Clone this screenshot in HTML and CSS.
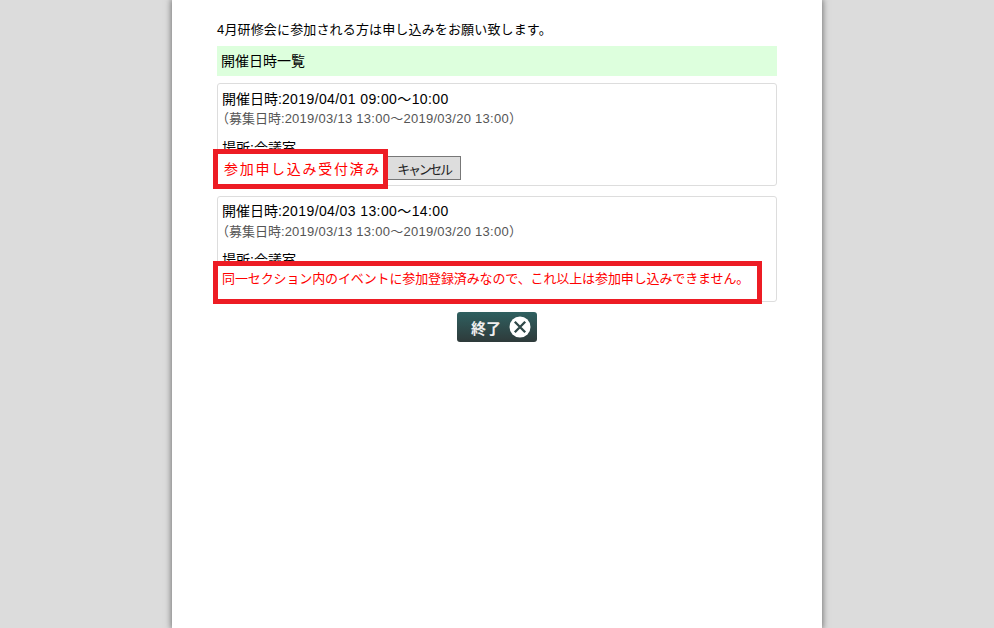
FILE: index.html
```html
<!DOCTYPE html>
<html lang="ja">
<head>
    <meta charset="UTF-8">
    <title>開催日時一覧</title>
    <link rel="stylesheet" href="styles.css">
</head>
<body>
    <div class="page">
        <p class="intro">4月研修会に参加される方は申し込みをお願い致します。</p>
        <div class="list-title">開催日時一覧</div>

        <div class="event">
            <div class="event-date">開催日時:<span class="date-value">2019/04/01 09:00～10:00</span></div>
            <div class="event-term">（募集日時:<span class="term-value">2019/03/13 13:00～2019/03/20 13:00</span>）</div>
            <div class="event-place">場所:会議室</div>
            <div class="event-status">
                <span class="done">参加申し込み受付済み</span>
                <button class="cancel-button">キャンセル</button>
            </div>
            <div class="mark mark-first"></div>
        </div>

        <div class="event">
            <div class="event-date">開催日時:<span class="date-value">2019/04/03 13:00～14:00</span></div>
            <div class="event-term">（募集日時:<span class="term-value">2019/03/13 13:00～2019/03/20 13:00</span>）</div>
            <div class="event-place">場所:会議室</div>
            <div class="event-status event-status-wide">
                <span class="notice">同一セクション内のイベントに参加登録済みなので、これ以上は参加申し込みできません。</span>
            </div>
            <div class="mark mark-second"></div>
        </div>

        <div class="actions">
            <div class="end-button">
                <span>終了</span>
                <svg width="22" height="22" viewBox="0 0 22 22">
                    <circle cx="11" cy="11" r="10.5" fill="#fff"/>
                    <path d="M5.8 5.8 L16.2 16.2 M16.2 5.8 L5.8 16.2" stroke="#2f4848" stroke-width="2.3" fill="none"/>
                </svg>
            </div>
        </div>
    </div>
</body>
</html>
```

FILE: styles.css
```css
html, body {
    margin: 0;
    padding: 0;
    height: 100%;
    overflow: hidden;
}

body {
    background-color: #dcdcdc;
    font-family: "Liberation Sans", Arial, "Noto Sans CJK JP", sans-serif;
    font-size: 14px;
    color: #000;
}

.page {
    width: 650px;
    height: 628px;
    box-sizing: border-box;
    margin-left: 172px;
    padding: 21px 45px 0;
    background-color: #fff;
    box-shadow: 0 0 6px 1px #777;
}

.intro {
    margin: 0 0 8px;
    height: 17px;
    line-height: 17px;
    font-size: 13px;
    letter-spacing: 0.15px;
}

.list-title {
    height: 30px;
    line-height: 30px;
    padding-left: 4px;
    margin-bottom: 7px;
    background-color: #dfd;
}

.event {
    position: relative;
    height: 101px;
    margin-bottom: 10px;
    padding: 0 4px;
    border: 1px solid #ddd;
    border-radius: 3px;
}

.event + .event {
    height: 104px;
}

.event-date {
    margin-top: 6px;
    height: 18px;
    line-height: 18px;
}

.date-value {
    letter-spacing: 0.4px;
}

.event-term {
    height: 20px;
    line-height: 22px;
    margin-left: -6px;
    font-size: 13px;
    color: #555;
}

.term-value {
    letter-spacing: 0.27px;
}

.event-place {
    margin-top: 11px;
    height: 14px;
    line-height: 18px;
}

.event + .event .event-date {
    margin-top: 5px;
}

.event + .event .event-term {
    margin-top: 1px;
}

.event + .event .event-place {
    margin-top: 10px;
}

.event-status {
    position: relative;
    z-index: 1;
    display: flex;
    align-items: center;
    height: 24px;
    margin-top: 3px;
}

.event + .event .event-status {
    height: 20px;
    margin-top: 2px;
}

.done {
    width: 164px;
    padding-left: 2px;
    color: #f00;
    letter-spacing: 1.7px;
    white-space: nowrap;
}

.notice {
    color: #f00;
    font-size: 13px;
    letter-spacing: -0.12px;
    white-space: nowrap;
}

.cancel-button {
    width: 73px;
    height: 24px;
    margin: 0;
    padding: 0;
    font-family: inherit;
    font-size: 13px;
    letter-spacing: -2.3px;
    color: #222;
    background-color: #ddd;
    border: 1px solid #777;
    border-left: none;
}

/* red annotation boxes drawn over the cards */
.mark {
    position: absolute;
    box-sizing: border-box;
    border: 5px solid #ed1c24;
    background-color: #fff;
}

.mark-first {
    left: -5px;
    top: 65px;
    width: 175px;
    height: 40px;
}

.mark-second {
    left: -5px;
    top: 64px;
    width: 549px;
    height: 43px;
}

.actions {
    display: flex;
    justify-content: center;
}

.end-button {
    display: flex;
    align-items: center;
    justify-content: space-between;
    box-sizing: border-box;
    width: 80px;
    height: 30px;
    padding: 0 6px 0 14px;
    border-radius: 3px;
    background: linear-gradient(#2f6060, #2e3a3a);
    color: #eee;
    font-weight: bold;
    font-size: 15px;
}
```
